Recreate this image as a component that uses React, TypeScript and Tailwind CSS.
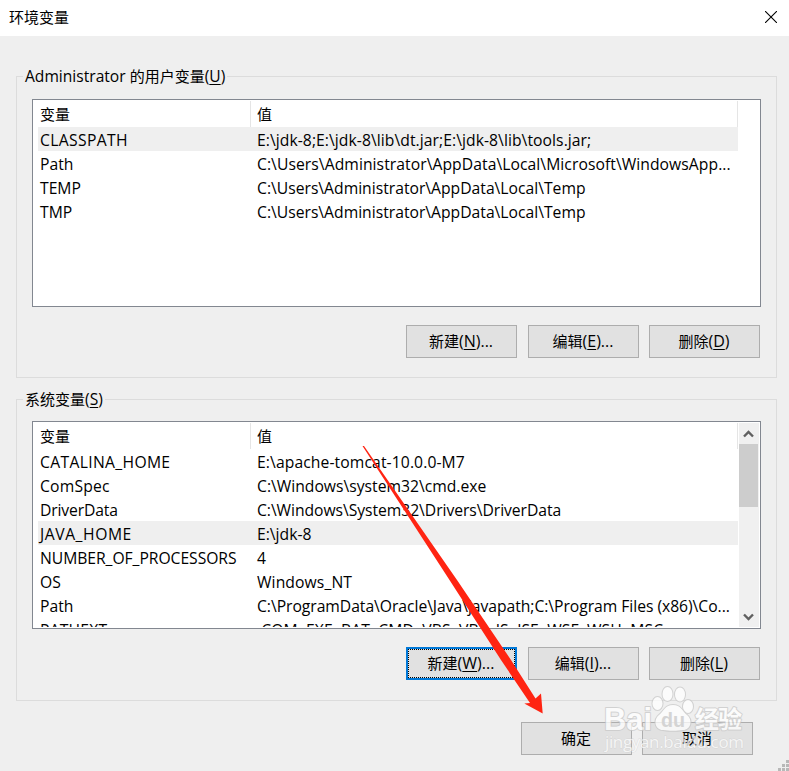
import type { ReactNode } from "react";

type Variable = { name: string; value: string; selected?: boolean; nameClass?: string; valueClass?: string };

const USER_VARIABLES: Variable[] = [
  {
    name: "CLASSPATH",
    value: "E:\\jdk-8;E:\\jdk-8\\lib\\dt.jar;E:\\jdk-8\\lib\\tools.jar;",
    selected: true,
    nameClass: "tracking-[0.35px]",
    valueClass: "tracking-[0.06px]",
  },
  { name: "Path", value: "C:\\Users\\Administrator\\AppData\\Local\\Microsoft\\WindowsApp...", valueClass: "tracking-[0.06px]" },
  { name: "TEMP", value: "C:\\Users\\Administrator\\AppData\\Local\\Temp" },
  { name: "TMP", value: "C:\\Users\\Administrator\\AppData\\Local\\Temp" },
];

const SYSTEM_VARIABLES: Variable[] = [
  { name: "CATALINA_HOME", value: "E:\\apache-tomcat-10.0.0-M7", nameClass: "tracking-[0.33px]", valueClass: "tracking-[0.1px]" },
  { name: "ComSpec", value: "C:\\Windows\\system32\\cmd.exe", nameClass: "tracking-[0.2px]" },
  { name: "DriverData", value: "C:\\Windows\\System32\\Drivers\\DriverData", nameClass: "tracking-[-0.15px]", valueClass: "tracking-[-0.05px]" },
  { name: "JAVA_HOME", value: "E:\\jdk-8", selected: true, nameClass: "tracking-[0.55px]" },
  { name: "NUMBER_OF_PROCESSORS", value: "4", nameClass: "tracking-[-0.05px]" },
  { name: "OS", value: "Windows_NT", valueClass: "tracking-[0.1px]" },
  { name: "Path", value: "C:\\ProgramData\\Oracle\\Java\\javapath;C:\\Program Files (x86)\\Co...", valueClass: "tracking-[-0.04px]" },
  { name: "PATHEXT", value: ".COM;.EXE;.BAT;.CMD;.VBS;.VBE;.JS;.JSE;.WSF;.WSH;.MSC", nameClass: "tracking-[0.2px]", valueClass: "tracking-[0.07px]" },
];

export default function App() {
  return (
    <div className="relative flex h-[771px] w-[789px] flex-col overflow-hidden bg-[#efefef] font-['Open_Sans','Noto_Sans_CJK_SC',sans-serif] text-[15px] leading-6 text-black">
      <header className="flex h-9 shrink-0 items-center justify-between bg-white pr-3 pb-0.5 pl-[9px]">
        <h1>环境变量</h1>
        <svg className="size-3" viewBox="0 0 12 12" fill="none" stroke="black" strokeWidth="1.1">
          <path d="M0 0L12 12M12 0L0 12" />
        </svg>
      </header>
      <main className="flex flex-col pt-7 pr-3 pl-4">
        <Group owner="Administrator" title="的用户变量" hotkey="U" className="pt-px">
          <VariableList variables={USER_VARIABLES} />
          <div className="mt-[18px] mr-px flex">
            <Button label="新建" hotkey="N" more />
            <Button label="编辑" hotkey="E" more className="ml-[11px]" />
            <Button label="删除" hotkey="D" className="ml-2.5" />
          </div>
        </Group>
        <Group title="系统变量" hotkey="S" className="mt-[9px]">
          <VariableList variables={SYSTEM_VARIABLES} scroll />
          <div className="mt-[18px] mr-px flex">
            <Button label="新建" hotkey="W" more focused />
            <Button label="编辑" hotkey="I" more className="ml-[11px]" />
            <Button label="删除" hotkey="L" className="ml-2.5" />
          </div>
        </Group>
        <div className="mt-[21px] flex justify-end gap-2.5 pr-6">
          <Button label="确定" />
          <Button label="取消" />
        </div>
      </main>
      <SizeGrip />
      <Watermark />
      <Arrow />
    </div>
  );
}

function Hotkey({ letter }: { letter: string }) {
  return (
    <>
      (<u className="decoration-1 underline-offset-[2px]">{letter}</u>)
    </>
  );
}

function Group({ owner, title, hotkey, className = "", children }: { owner?: string; title: string; hotkey: string; className?: string; children: ReactNode }) {
  return (
    <fieldset className={`h-[314px] w-[761px] border border-[#dcdcdc] pl-[15px] ${className}`}>
      <legend className="-ml-[9px] h-6 px-[2px]">
        {owner && <span className="text-[15.6px]">{owner} </span>}
        {title}
        <span className="text-[15.6px]">
          <Hotkey letter={hotkey} />
        </span>
      </legend>
      <div className="flex flex-col items-end pt-[10px] pr-[15px]">{children}</div>
    </fieldset>
  );
}

function VariableList({ variables, scroll = false }: { variables: Variable[]; scroll?: boolean }) {
  return (
    <div className="flex h-[208px] w-[729px] overflow-hidden border border-[#828790] bg-white p-px">
      <div className="h-[204px] w-[704px] shrink-0 overflow-hidden pl-1">
        <div className="flex h-[26px]">
          <span className="w-[213px] border-r border-[#e5e5e5] pt-px pl-[2px]">变量</span>
          <span className="grow border-r border-[#e5e5e5] pt-px pl-1.5">值</span>
        </div>
        {variables.map((v) => (
          <div key={v.name} className={`flex h-6 pt-px text-[15.7px] whitespace-pre ${v.selected ? "bg-[#efefef]" : ""}`}>
            <span className={`w-[219px] pl-[2px] ${v.nameClass ?? ""}`}>{v.name}</span>
            <span className={v.valueClass}>{v.value}</span>
          </div>
        ))}
      </div>
      {scroll && <Scrollbar />}
    </div>
  );
}

function Scrollbar() {
  return (
    <div className="ml-px flex w-5 flex-col items-center bg-[#f0f0f0] pr-px">
      <div className="flex h-[21px] items-center">
        <Chevron d="M1 6.500L5.500 2L10 6.500" />
      </div>
      <div className="h-[63px] w-[19px] self-start bg-[#cdcdcd]" />
      <div className="mt-auto flex h-[21px] items-center">
        <Chevron d="M1 1.500L5.500 6L10 1.500" />
      </div>
    </div>
  );
}

function Chevron({ d }: { d: string }) {
  return (
    <svg className="h-2 w-[11px]" viewBox="0 0 11 8" fill="none" stroke="#606060" strokeWidth="2.4">
      <path d={d} />
    </svg>
  );
}

function Button({ label, hotkey, more, focused, className = "" }: { label: string; hotkey?: string; more?: boolean; focused?: boolean; className?: string }) {
  return (
    <button className={`flex h-[33px] w-[111px] bg-[#e1e1e1] ${focused ? "border-2 border-[#0078d7]" : "border border-[#adadad]"} ${className}`}>
      <span className={`flex size-full items-center justify-center pr-px pb-0.5 ${focused ? "border border-dotted border-black" : ""}`}>
        <span>
          {label}
          {hotkey && (
            <span className="text-[16px]">
              <Hotkey letter={hotkey} />
              {more && "..."}
            </span>
          )}
        </span>
      </span>
    </button>
  );
}

function SizeGrip() {
  return (
    <svg className="absolute right-0 bottom-0 size-3" viewBox="0 0 12 12" fill="#b8b8b8">
      <path d="M9 1h3v3h-3zM5 5h3v3h-3zM9 5h3v3h-3zM1 9h3v3h-3zM5 9h3v3h-3zM9 9h3v3h-3z" />
    </svg>
  );
}

function Watermark() {
  return (
    <svg className="pointer-events-none absolute top-[680px] left-[600px] h-[80px] w-[150px]" viewBox="600 680 150 80">
      <g fill="white" stroke="#c8c8c8" strokeWidth="2" paintOrder="stroke" strokeLinejoin="round" opacity="0.75" fontFamily="Liberation Sans, Noto Sans CJK SC, sans-serif">
        <text x="604" y="730" fontSize="32" fontWeight="bold" textLength="48" lengthAdjust="spacingAndGlyphs">Bai</text>
        <ellipse cx="657.500" cy="703.500" rx="5" ry="6.500" />
        <ellipse cx="667.500" cy="694" rx="5" ry="7" />
        <ellipse cx="680" cy="694.500" rx="5" ry="7" />
        <ellipse cx="688" cy="706.500" rx="5" ry="6.500" />
        <path d="M673 705C681 705 682 711 687 715C693 720 691 730 683 730C677 731 669 731 663 730C655 730 653 720 659 715C664 711 665 705 673 705Z" />
        <text x="695" y="728" fontSize="24" fontWeight="bold" textLength="47">经验</text>
      </g>
      <text x="605" y="748" fontSize="17" fill="white" fillOpacity="0.75" stroke="#c8c8c8" strokeOpacity="0.45" strokeWidth="1" paintOrder="stroke" textLength="139">jingyan.baidu.com</text>
      <text x="661" y="727" fontSize="20" fontWeight="bold" fill="#d4d4d4" fontFamily="Liberation Sans, sans-serif" textLength="24" lengthAdjust="spacingAndGlyphs">du</text>
    </svg>
  );
}

function Arrow() {
  return (
    <svg className="pointer-events-none absolute inset-0 size-full" viewBox="0 0 789 771" fill="#ff2412">
      <path d="M362.500 446L364 446L457 580L511 660L535.500 698.500L541 693.500L542.700 713.500L524.300 703.500L530 703L501 660L449.500 580Z" />
    </svg>
  );
}
